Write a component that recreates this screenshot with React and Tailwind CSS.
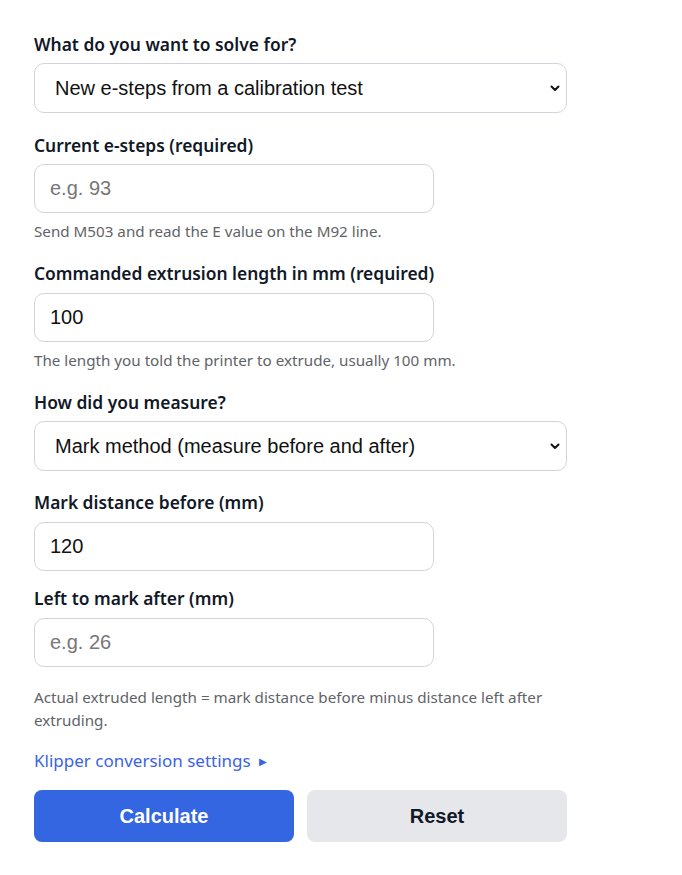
import React from "react";

const labelCls = "block text-[17.4px] leading-6 font-semibold text-[#111827] [font-family:'Noto_Sans',sans-serif]";
const helpCls = "text-[15.2px] leading-[23px] text-[#5f6368] [font-family:'Noto_Sans',sans-serif]";
const inputCls = "block w-[400px] h-[49px] rounded-[10px] border border-[#d1d5db] bg-white px-[15px] text-[20px] text-[#111] placeholder:text-[#777] [font-family:'Liberation_Sans',Arial,sans-serif] outline-none";

function Chevron() {
  return (
    <svg width="12" height="12" viewBox="0 0 12 12" className="absolute right-[5px] top-1/2 -translate-y-1/2">
      <path d="M2.5 4.5 L6 8 L9.5 4.5" fill="none" stroke="#111" strokeWidth="2" strokeLinecap="round" strokeLinejoin="round" />
    </svg>
  );
}

function Select({ value }) {
  return (
    <div className="relative w-[533px] h-[50px] rounded-[10px] border border-[#d1d5db] bg-white flex items-center px-[20px] text-[20px] text-[#111] [font-family:'Liberation_Sans',Arial,sans-serif]">
      <span>{value}</span>
      <Chevron />
    </div>
  );
}

export default function App() {
  return (
    <div className="min-h-[875px] bg-white pl-[34px] pt-[32px]">
      <div className="w-[533px] flex flex-col">
        <label className={labelCls}>What do you want to solve for?</label>
        <div className="mt-[7px]"><Select value="New e-steps from a calibration test" /></div>

        <label className={labelCls + " mt-[20px]"}>Current e-steps (required)</label>
        <input className={inputCls + " mt-[7px]"} placeholder="e.g. 93" />
        <p className={helpCls + " mt-[7px]"}>Send M503 and read the E value on the M92 line.</p>

        <label className={labelCls + " mt-[18px]"}>Commanded extrusion length in mm (required)</label>
        <input className={inputCls + " mt-[8px]"} defaultValue="100" />
        <p className={helpCls + " mt-[7px]"}>The length you told the printer to extrude, usually 100 mm.</p>

        <label className={labelCls + " mt-[18px]"}>How did you measure?</label>
        <div className="mt-[7px]"><Select value="Mark method (measure before and after)" /></div>

        <label className={labelCls + " mt-[19px]"}>Mark distance before (mm)</label>
        <input className={inputCls + " mt-[8px]"} defaultValue="120" />

        <label className={labelCls + " mt-[15px]"}>Left to mark after (mm)</label>
        <input className={inputCls + " mt-[8px]"} placeholder="e.g. 26" />

        <p className={helpCls + " mt-[19px]"}>Actual extruded length = mark distance before minus distance left after extruding.</p>

        <div className="mt-[17px] flex items-center gap-[8px] text-[17px] leading-6 text-[#3b63e6] [font-family:'Noto_Sans',sans-serif]">
          <span>Klipper conversion settings</span>
          <span className="text-[10px]">▶</span>
        </div>

        <div className="mt-[17px] flex gap-[13px]">
          <button className="w-[260px] h-[52px] rounded-[8px] bg-[#3366e0] text-white text-[20px] font-bold [font-family:'Liberation_Sans',Arial,sans-serif]">Calculate</button>
          <button className="w-[260px] h-[52px] rounded-[8px] bg-[#e5e7eb] text-[#111827] text-[20px] font-bold [font-family:'Liberation_Sans',Arial,sans-serif]">Reset</button>
        </div>
      </div>
    </div>
  );
}
